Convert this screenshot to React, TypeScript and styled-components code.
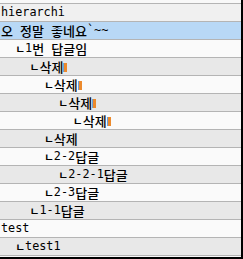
import styled, { createGlobalStyle } from "styled-components";

const GlobalStyle = createGlobalStyle`
  html, body {
    margin: 0;
    padding: 0;
    background: #ffffff;
  }
`;

const Frame = styled.div`
  width: 243px;
  height: 259px;
  box-sizing: border-box;
  padding-top: 3px;
  padding-bottom: 1px;
  background: #f8f8f8;
  border-right: 2px solid #000;
  border-bottom: 2px solid #000;
  overflow: hidden;
`;

const List = styled.ul`
  margin: 0;
  padding: 0;
  list-style: none;
  border-bottom: 1px solid #b4b4b4;
`;

const Row = styled.li<{ level: number; tone: "head" | "sel" | "odd" | "even" }>`
  display: flex;
  align-items: center;
  height: 17px;
  border-top: 1px solid #b4b4b4;
  padding-left: ${(p) => 1 + p.level * 14.4}px;
  background: ${(p) =>
    p.tone === "sel"
      ? "#b8d8f6"
      : p.tone === "head"
      ? "#f0f0f0"
      : p.tone === "odd"
      ? "#e8e8e8"
      : "#fafafa"};
  font-family: "DejaVu Sans Mono", "Noto Sans CJK KR", monospace;
  font-size: 11.8px;
  line-height: 17px;
  color: #000;
  white-space: pre;
`;

const Hangul = styled.span`
  font-family: "Noto Sans CJK KR", sans-serif;
  font-size: 13px;
  font-weight: 500;
`;

const Branch = styled.span`
  font-family: "Noto Sans CJK KR", sans-serif;
  font-size: 10.5px;
  font-weight: 700;
  line-height: 17px;
  margin-top: -1px;
`;

const Caret = styled.span`
  display: inline-block;
  width: 3px;
  height: 9px;
  margin-top: 1px;
  background: #ec8a2c;
  border-left: 1px solid #6f9fd6;
`;

type Item = { text: string; level: number; reply?: boolean; mark?: boolean };

const items: Item[] = [
  { text: "hierarchi", level: 0 },
  { text: "오 정말 좋네요`~~", level: 0 },
  { text: "1번 답글임", level: 1, reply: true },
  { text: "삭제", level: 2, reply: true, mark: true },
  { text: "삭제", level: 3, reply: true, mark: true },
  { text: "삭제", level: 4, reply: true, mark: true },
  { text: "삭제", level: 5, reply: true, mark: true },
  { text: "삭제", level: 3, reply: true },
  { text: "2-2답글", level: 3, reply: true },
  { text: "2-2-1답글", level: 4, reply: true },
  { text: "2-3답글", level: 3, reply: true },
  { text: "1-1답글", level: 2, reply: true },
  { text: "test", level: 0 },
  { text: "test1", level: 1, reply: true },
];

// split a label so the hangul runs get their own (wider) size
const renderText = (text: string) =>
  text
    .split(/([\uAC00-\uD7A3]+)/)
    .filter((s) => s.length)
    .map((s, i) =>
      /[\uAC00-\uD7A3]/.test(s) ? <Hangul key={i}>{s}</Hangul> : <span key={i}>{s}</span>
    );

export default function App() {
  return (
    <>
      <GlobalStyle />
      <Frame>
        <List>
          {items.map((it, i) => (
            <Row
              key={i}
              level={it.level}
              tone={i === 0 ? "head" : i === 1 ? "sel" : i % 2 ? "odd" : "even"}
            >
              {it.reply && <Branch>ㄴ</Branch>}
              {renderText(it.text)}
              {it.mark && <Caret />}
            </Row>
          ))}
        </List>
      </Frame>
    </>
  );
}
